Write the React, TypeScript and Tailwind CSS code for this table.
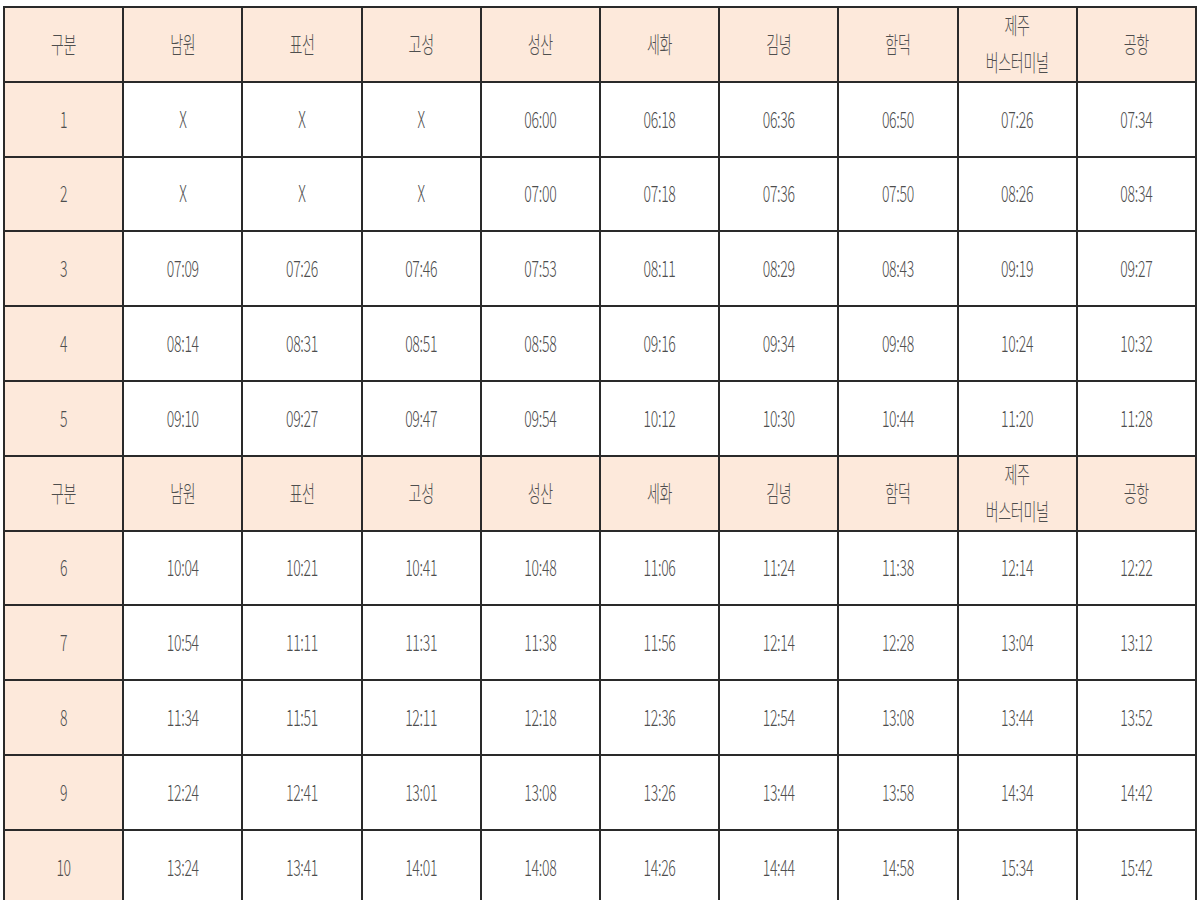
const header = ["구분", "남원", "표선", "고성", "성산", "세화", "김녕", "함덕", "제주\n버스터미널", "공항"];

const first = [
  ["1", "X", "X", "X", "06:00", "06:18", "06:36", "06:50", "07:26", "07:34"],
  ["2", "X", "X", "X", "07:00", "07:18", "07:36", "07:50", "08:26", "08:34"],
  ["3", "07:09", "07:26", "07:46", "07:53", "08:11", "08:29", "08:43", "09:19", "09:27"],
  ["4", "08:14", "08:31", "08:51", "08:58", "09:16", "09:34", "09:48", "10:24", "10:32"],
  ["5", "09:10", "09:27", "09:47", "09:54", "10:12", "10:30", "10:44", "11:20", "11:28"],
];

const second = [
  ["6", "10:04", "10:21", "10:41", "10:48", "11:06", "11:24", "11:38", "12:14", "12:22"],
  ["7", "10:54", "11:11", "11:31", "11:38", "11:56", "12:14", "12:28", "13:04", "13:12"],
  ["8", "11:34", "11:51", "12:11", "12:18", "12:36", "12:54", "13:08", "13:44", "13:52"],
  ["9", "12:24", "12:41", "13:01", "13:08", "13:26", "13:44", "13:58", "14:34", "14:42"],
  ["10", "13:24", "13:41", "14:01", "14:08", "14:26", "14:44", "14:58", "15:34", "15:42"],
];

function Label({ text }: { text: string }) {
  return (
    <span className="inline-block scale-y-160 whitespace-pre-line leading-[23px]">{text}</span>
  );
}

function HeaderRow() {
  return (
    <tr className="h-[74.8px]">
      {header.map((h) => (
        <td key={h} className="border-2 border-[#2a2a2a] bg-[#fde9db] text-center align-middle">
          <Label text={h} />
        </td>
      ))}
    </tr>
  );
}

function TimeRows({ rows }: { rows: string[][] }) {
  return (
    <>
      {rows.map((row) => (
        <tr key={row[0]} className="h-[74.8px]">
          {row.map((cell, i) => (
            <td
              key={i}
              className={`border-2 border-[#2a2a2a] text-center align-middle ${i === 0 ? "bg-[#fde9db]" : "bg-white"}`}
            >
              <Label text={cell} />
            </td>
          ))}
        </tr>
      ))}
    </>
  );
}

export default function App() {
  return (
    <div className="h-[900px] w-[1200px] overflow-hidden bg-white pl-[3px] pt-[6px]">
      <table
        className="w-[1194px] table-fixed border-collapse border-2 border-[#555] text-[14px] font-light tracking-[-0.3px] text-[#4e4e4e]"
        style={{ fontFamily: '"Noto Sans CJK KR", "Noto Sans", sans-serif' }}
      >
        <tbody>
          <HeaderRow />
          <TimeRows rows={first} />
          <HeaderRow />
          <TimeRows rows={second} />
        </tbody>
      </table>
    </div>
  );
}
